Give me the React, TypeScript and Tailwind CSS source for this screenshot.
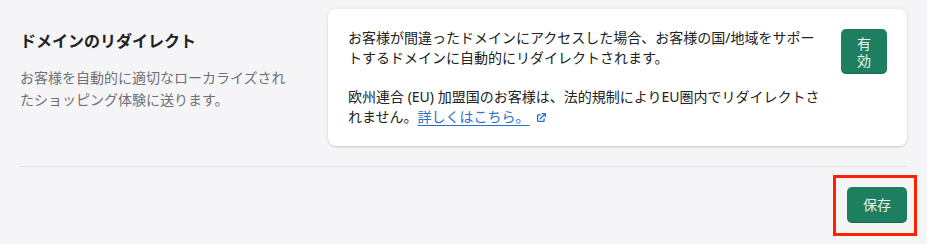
import React from 'react';

function ExternalIcon() {
  return (
    <svg viewBox="0 0 20 20" className="inline-block w-[13px] h-[13px] ml-[5px] align-[-2px]" fill="#2c6ecb">
      <path d="M11 3a1 1 0 1 0 0 2h2.59l-6.3 6.29a1 1 0 1 0 1.42 1.42L15 6.41V9a1 1 0 1 0 2 0V4a1 1 0 0 0-1-1h-5z" />
      <path d="M5 5a2 2 0 0 0-2 2v8a2 2 0 0 0 2 2h8a2 2 0 0 0 2-2v-3a1 1 0 1 0-2 0v3H5V7h3a1 1 0 0 0 0-2H5z" />
    </svg>
  );
}

export default function App() {
  return (
    <div
      className="min-h-[244px] w-full bg-[#f5f5f7] pt-[9px] pl-[19px] pr-[20px] text-[#202223]"
      style={{ fontFamily: '"Noto Sans", "Noto Sans CJK JP", sans-serif' }}
    >
      {/* Annotated section */}
      <div className="flex gap-5">
        <div className="w-[289px] shrink-0 pt-5 pl-px">
          <h2 className="text-[16px] leading-6 font-bold">ドメインのリダイレクト</h2>
          <p className="mt-[14px] w-[270px] text-[14px] leading-[22px] text-[#6d7175]">
            お客様を自動的に適切なローカライズされたショッピング体験に送ります。
          </p>
        </div>

        <div className="flex-1 rounded-lg bg-white px-5 pt-[19px] pb-[19px] shadow-[0_0_5px_rgba(23,24,24,0.05),0_1px_2px_rgba(0,0,0,0.15)]">
          <div className="flex items-start gap-5">
            <div className="flex-1 text-[14px] leading-5">
              <p>
                お客様が間違ったドメインにアクセスした場合、お客様の国/地域をサポートするドメインに自動的にリダイレクトされます。
              </p>
              <p className="mt-[19px]">
                欧州連合 (EU) 加盟国のお客様は、法的規制によりEU圏内でリダイレクトされません。
                <a href="#" className="text-[#2c6ecb] underline underline-offset-[3px]">詳しくはこちら。</a>
                <ExternalIcon />
              </p>
            </div>
            <button className="mt-px flex h-[45px] w-[46px] shrink-0 flex-col items-center justify-center rounded-[5px] bg-[#1d7f60] text-[14px] leading-[17px] text-white/90 shadow-[inset_0_-1px_0_rgba(0,0,0,0.2)]">
              <span>有</span>
              <span>効</span>
            </button>
          </div>
        </div>
      </div>

      <div className="mt-5 h-px bg-[#e1e3e5]" />

      <div className="flex justify-end pt-5 pb-[22px]">
        <div className="relative">
          <button className="h-9 rounded-[5px] bg-[#1d7f60] px-4 text-[14px] leading-5 text-white/90 shadow-[inset_0_-1px_0_rgba(0,0,0,0.2)]">
            保存
          </button>
          <span className="pointer-events-none absolute -left-[14px] -right-[10px] -top-[12px] -bottom-[13px] border-[3px] border-[#ff2200]" />
        </div>
      </div>
    </div>
  );
}
